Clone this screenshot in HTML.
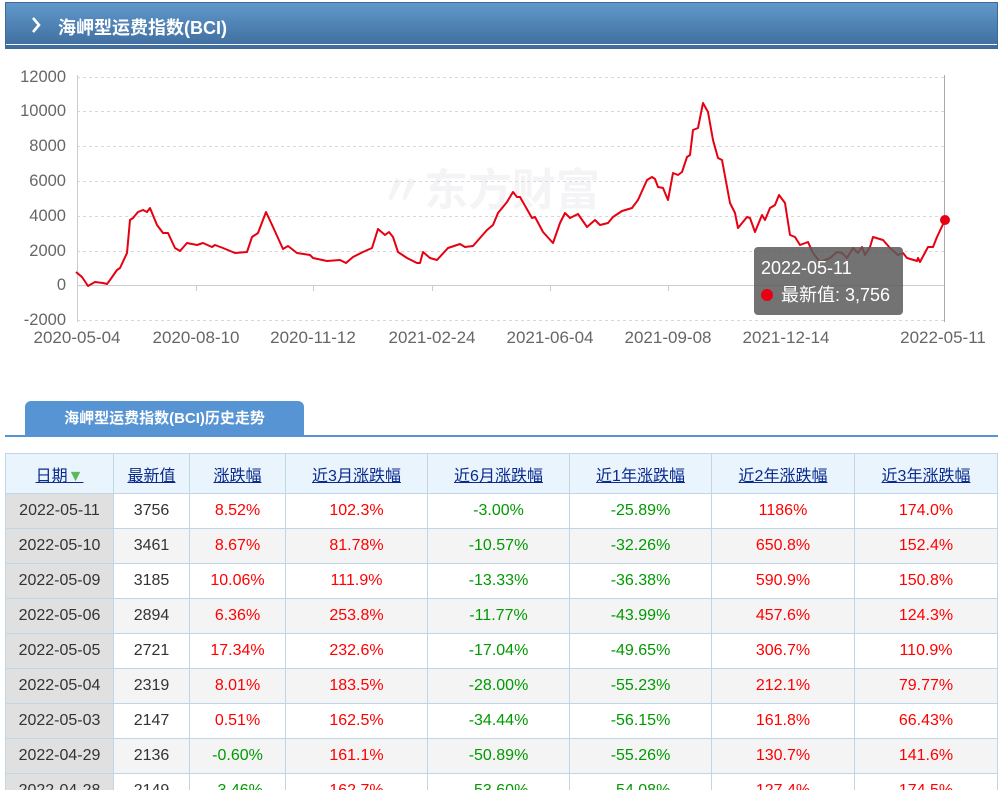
<!DOCTYPE html>
<html><head><meta charset="utf-8"><style>
*{margin:0;padding:0;box-sizing:border-box}
html,body{width:999px;height:790px;overflow:hidden}
body{background:#fff;font-family:"Liberation Sans","Noto Sans CJK SC",sans-serif;position:relative}
.hdr{position:absolute;left:5px;top:2px;width:993px;height:47px;border:1px solid #3e6a9a;background:linear-gradient(#6099cb,#3f6c9e);}
.hdr:after{content:"";position:absolute;left:0;right:0;bottom:3px;height:1px;background:#fff}
.hdr .t{position:absolute;left:52px;top:11px;color:#fff;font-weight:bold;font-size:18px}
.chart{position:absolute;left:0;top:0}
.tab{position:absolute;left:25px;top:401px;width:279px;height:35px;background:#5694d3;border-radius:6px 6px 0 0;color:#fff;font-weight:bold;font-size:15px;text-align:center;line-height:35px}
.tline{position:absolute;left:5px;top:435px;width:993px;height:2px;background:#5694d3}
table{position:absolute;left:5px;top:453px;border-collapse:collapse;font-size:16px;table-layout:fixed}
td,th{border:1px solid #bfd5e8;text-align:center;height:35px;font-weight:normal;color:#333}
th{height:40px;background:#eaf4fd;color:#0a2a8c;text-decoration:underline}
td.d{background:#e0e0e0}
tr.g td{background:#f4f4f4}
tr.g td.d{background:#e0e0e0}
.r{color:#f00 !important}.gr{color:#090 !important}
</style></head><body>
<div class="hdr"><svg style="position:absolute;left:24px;top:13px" width="12" height="18"><path d="M3 2 L9 9 L3 16" stroke="#fff" stroke-width="2.6" fill="none"/></svg><span class="t">海岬型运费指数(BCI)</span></div>
<svg class="chart" width="999" height="390" font-family="Liberation Sans, sans-serif">
<text x="380" y="205" font-size="44" font-weight="bold" fill="#f4f4f6" font-family="Noto Sans CJK SC">〃东方财富</text>
<g stroke="#d8d8d8" stroke-dasharray="3,3" stroke-width="1">
<line x1="77" y1="77.5" x2="945" y2="77.5"/><line x1="77" y1="111.5" x2="945" y2="111.5"/><line x1="77" y1="146.5" x2="945" y2="146.5"/><line x1="77" y1="181.5" x2="945" y2="181.5"/><line x1="77" y1="216.5" x2="945" y2="216.5"/><line x1="77" y1="251.5" x2="945" y2="251.5"/><line x1="77" y1="320.5" x2="945" y2="320.5"/>
</g>
<line x1="77" y1="285.5" x2="945" y2="285.5" stroke="#ccc"/>
<line x1="77.5" y1="75" x2="77.5" y2="322" stroke="#ccc"/>
<line x1="944.5" y1="75" x2="944.5" y2="322" stroke="#aaa"/>
<g stroke="#ccc"><line x1="196.5" y1="285" x2="196.5" y2="291"/><line x1="313.5" y1="285" x2="313.5" y2="291"/><line x1="432.5" y1="285" x2="432.5" y2="291"/><line x1="550.5" y1="285" x2="550.5" y2="291"/><line x1="668.5" y1="285" x2="668.5" y2="291"/></g>
<g font-size="16.5" fill="#666" text-anchor="end">
<text x="66" y="82">12000</text><text x="66" y="116">10000</text><text x="66" y="151">8000</text><text x="66" y="186">6000</text><text x="66" y="221">4000</text><text x="66" y="256">2000</text><text x="66" y="290">0</text><text x="66" y="325">-2000</text></g>
<g font-size="17" fill="#666" text-anchor="middle">
<text x="77" y="343">2020-05-04</text><text x="196" y="343">2020-08-10</text><text x="313" y="343">2020-11-12</text><text x="432" y="343">2021-02-24</text><text x="550" y="343">2021-06-04</text><text x="668" y="343">2021-09-08</text><text x="786" y="343">2021-12-14</text><text x="943" y="343">2022-05-11</text></g>
<polyline fill="none" stroke="#e60012" stroke-width="2" stroke-linejoin="round" points="76,272 82,277 88,286 95,282 103,283 107,284 110,280 117,270 120,268 127,253 130,220 133,218 138,212 143,210 147,212 150,208 157,225 163,233 168,233 175,248 180,251 187,243 197,245 203,243 212,247 215,245 223,248 235,253 247,252 252,237 258,233 266,212 273,227 283,249 288,246 297,253 310,255 313,258 327,261 340,260 346,263 353,257 363,252 372,248 378,229 385,235 389,232 393,237 398,252 407,258 417,263 420,263 423,252 430,258 437,260 448,248 460,244 465,247 473,246 480,238 487,230 493,225 498,213 507,202 513,192 517,197 520,197 532,218 535,217 543,232 553,243 560,223 565,213 570,218 578,214 587,227 595,220 600,225 608,223 613,217 622,211 632,208 638,200 647,180 652,177 655,179 658,187 663,188 668,200 673,173 678,175 682,172 687,157 690,155 693,130 698,128 703,103 708,112 713,140 718,158 722,160 730,203 735,213 738,228 747,217 750,218 755,232 762,215 765,220 770,208 775,205 779,195 785,203 790,235 795,237 800,245 808,242 813,253 820,262 830,258 837,252 842,253 847,258 853,248 858,253 862,247 865,255 870,247 873,237 883,240 890,248 898,255 903,253 907,258 917,261 918,258 920,262 928,247 933,247 937,237 945,220"/>
<circle cx="945" cy="220" r="5" fill="#e60012"/>
<rect x="754" y="247" width="149" height="68" rx="4" fill="rgba(90,90,90,0.85)"/>
<text x="761" y="274" font-size="18" fill="#fff">2022-05-11</text>
<circle cx="767" cy="295" r="6" fill="#e60012"/>
<text x="781" y="301" font-size="18" fill="#fff" font-family="Liberation Sans, Noto Sans CJK SC, sans-serif">最新值: 3,756</text>
</svg>
<div class="tab">海岬型运费指数(BCI)历史走势</div>
<div class="tline"></div>
<table>
<colgroup><col style="width:108px"><col style="width:76px"><col style="width:96px"><col style="width:142px"><col style="width:142px"><col style="width:142px"><col style="width:143px"><col style="width:143px"></colgroup>
<tr><th>日期<span style="color:#5cb85c;text-decoration:none">▼</span></th><th>最新值</th><th>涨跌幅</th><th>近3月涨跌幅</th><th>近6月涨跌幅</th><th>近1年涨跌幅</th><th>近2年涨跌幅</th><th>近3年涨跌幅</th></tr>
<tr><td class="d">2022-05-11</td><td>3756</td><td class="r">8.52%</td><td class="r">102.3%</td><td class="gr">-3.00%</td><td class="gr">-25.89%</td><td class="r">1186%</td><td class="r">174.0%</td></tr>
<tr class="g"><td class="d">2022-05-10</td><td>3461</td><td class="r">8.67%</td><td class="r">81.78%</td><td class="gr">-10.57%</td><td class="gr">-32.26%</td><td class="r">650.8%</td><td class="r">152.4%</td></tr>
<tr><td class="d">2022-05-09</td><td>3185</td><td class="r">10.06%</td><td class="r">111.9%</td><td class="gr">-13.33%</td><td class="gr">-36.38%</td><td class="r">590.9%</td><td class="r">150.8%</td></tr>
<tr class="g"><td class="d">2022-05-06</td><td>2894</td><td class="r">6.36%</td><td class="r">253.8%</td><td class="gr">-11.77%</td><td class="gr">-43.99%</td><td class="r">457.6%</td><td class="r">124.3%</td></tr>
<tr><td class="d">2022-05-05</td><td>2721</td><td class="r">17.34%</td><td class="r">232.6%</td><td class="gr">-17.04%</td><td class="gr">-49.65%</td><td class="r">306.7%</td><td class="r">110.9%</td></tr>
<tr class="g"><td class="d">2022-05-04</td><td>2319</td><td class="r">8.01%</td><td class="r">183.5%</td><td class="gr">-28.00%</td><td class="gr">-55.23%</td><td class="r">212.1%</td><td class="r">79.77%</td></tr>
<tr><td class="d">2022-05-03</td><td>2147</td><td class="r">0.51%</td><td class="r">162.5%</td><td class="gr">-34.44%</td><td class="gr">-56.15%</td><td class="r">161.8%</td><td class="r">66.43%</td></tr>
<tr class="g"><td class="d">2022-04-29</td><td>2136</td><td class="gr">-0.60%</td><td class="r">161.1%</td><td class="gr">-50.89%</td><td class="gr">-55.26%</td><td class="r">130.7%</td><td class="r">141.6%</td></tr>
<tr><td class="d">2022-04-28</td><td>2149</td><td class="gr">-3.46%</td><td class="r">162.7%</td><td class="gr">-53.60%</td><td class="gr">-54.08%</td><td class="r">127.4%</td><td class="r">174.5%</td></tr>
</table>
</body></html>
